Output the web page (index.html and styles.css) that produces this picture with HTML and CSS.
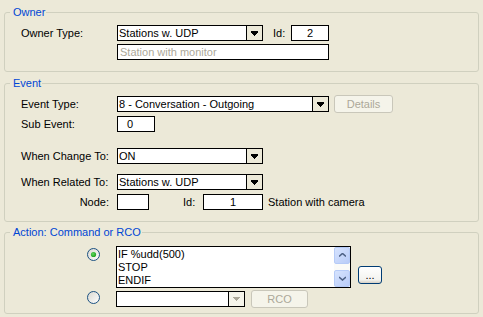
FILE: index.html
```html
<!DOCTYPE html>
<html lang="en">
<head>
    <meta charset="UTF-8">
    <title>Event Action</title>
    <link rel="stylesheet" href="styles.css">
</head>
<body>
    <div class="dialog">
        <fieldset class="group">
            <legend>Owner</legend>
            <div class="body owner">
                <div class="row">
                    <span class="label">Owner Type:</span>
                    <div class="combo w146">
                        <span class="value">Stations w. UDP</span>
                        <span class="drop"><svg width="7" height="5"><path d="M0 0h7v2H0zM1 2h5v1H1zM2 3h3v1H2zM3 4h1v1H3z"/></svg></span>
                    </div>
                    <span class="id-label">Id:</span>
                    <div class="edit w38 center">2</div>
                </div>
                <div class="row gap3">
                    <span class="label"></span>
                    <div class="edit w212 disabled">Station with monitor</div>
                </div>
            </div>
        </fieldset>

        <fieldset class="group event">
            <legend>Event</legend>
            <div class="body">
                <div class="row">
                    <span class="label">Event Type:</span>
                    <div class="combo w212">
                        <span class="value">8 - Conversation - Outgoing</span>
                        <span class="drop"><svg width="7" height="5"><path d="M0 0h7v2H0zM1 2h5v1H1zM2 3h3v1H2zM3 4h1v1H3z"/></svg></span>
                    </div>
                    <button class="btn disabled details">Details</button>
                </div>
                <div class="row gap4">
                    <span class="label">Sub Event:</span>
                    <div class="edit w38 pad9">0</div>
                </div>
                <div class="row gap16">
                    <span class="label">When Change To:</span>
                    <div class="combo w146">
                        <span class="value">ON</span>
                        <span class="drop"><svg width="7" height="5"><path d="M0 0h7v2H0zM1 2h5v1H1zM2 3h3v1H2zM3 4h1v1H3z"/></svg></span>
                    </div>
                </div>
                <div class="row gap10">
                    <span class="label">When Related To:</span>
                    <div class="combo w146">
                        <span class="value">Stations w. UDP</span>
                        <span class="drop"><svg width="7" height="5"><path d="M0 0h7v2H0zM1 2h5v1H1zM2 3h3v1H2zM3 4h1v1H3z"/></svg></span>
                    </div>
                </div>
                <div class="row gap4">
                    <span class="label right">Node:</span>
                    <div class="edit w32"></div>
                    <span class="id-label node-id">Id:</span>
                    <div class="edit w60 center">1</div>
                    <span class="note">Station with camera</span>
                </div>
            </div>
        </fieldset>

        <fieldset class="group action">
            <legend>Action: Command or RCO</legend>
            <div class="body">
                <div class="row tall">
                    <span class="radio-cell">
                        <svg class="radio" width="13" height="13" viewBox="0 0 13 13">
                            <defs>
                                <linearGradient id="rg1" x1="0" y1="0" x2="1" y2="1">
                                    <stop offset="0" stop-color="#D8D7CF"/>
                                    <stop offset="1" stop-color="#FFFFFF"/>
                                </linearGradient>
                                <radialGradient id="dot" cx="0.4" cy="0.4" r="0.6">
                                    <stop offset="0" stop-color="#5ED85E"/>
                                    <stop offset="1" stop-color="#21A121"/>
                                </radialGradient>
                            </defs>
                            <circle cx="6.5" cy="6.5" r="6" fill="url(#rg1)" stroke="#1C5180"/>
                            <circle cx="6.5" cy="6.5" r="2.6" fill="url(#dot)"/>
                        </svg>
                    </span>
                    <div class="memo">
                        <div class="lines">IF %udd(500)<br>STOP<br>ENDIF</div>
                        <div class="scroll">
                            <span class="sbtn"><svg width="7" height="5"><path d="M0 3.5L3.5 0.5L7 3.5" fill="none" stroke="#4D6185" stroke-width="1.6"/></svg></span>
                            <span class="track"></span>
                            <span class="sbtn"><svg width="7" height="5"><path d="M0 1L3.5 4L7 1" fill="none" stroke="#4D6185" stroke-width="1.6"/></svg></span>
                        </div>
                    </div>
                    <button class="btn xp dots">...</button>
                </div>
                <div class="row gap2 low">
                    <span class="radio-cell">
                        <svg class="radio" width="13" height="13" viewBox="0 0 13 13">
                            <defs>
                                <linearGradient id="rg2" x1="0" y1="0" x2="1" y2="1">
                                    <stop offset="0" stop-color="#D8D7CF"/>
                                    <stop offset="1" stop-color="#FFFFFF"/>
                                </linearGradient>
                            </defs>
                            <circle cx="6.5" cy="6.5" r="6" fill="url(#rg2)" stroke="#1C5180"/>
                        </svg>
                    </span>
                    <div class="combo w129 off">
                        <span class="value"></span>
                        <span class="drop"><svg width="7" height="5"><path d="M0 0h7v1H0zM1 1h5v1H1zM2 2h3v1H2zM3 3h1v1H3z" fill="#ACA899"/></svg></span>
                    </div>
                    <button class="btn disabled rco">RCO</button>
                </div>
            </div>
        </fieldset>
    </div>
</body>
</html>
```

FILE: styles.css
```css
body {
    margin: 0;
    background-color: #ECE9D8;
    font: 11px "Liberation Sans", Arial, sans-serif;
    color: #000;
}

.dialog {
    padding: 5px 4px 0 4px;
}

.group {
    margin: 0;
    padding: 0;
    min-width: 0;
    border: 1px solid #D0D0BF;
    border-radius: 3px;
}

.group.event {
    margin-top: 4px;
}

.group.action {
    margin-top: 3px;
}

.group legend {
    margin-left: 5px;
    padding: 0 1px 0 3px;
    line-height: 14px;
    color: #0046D5;
}

.body {
    padding: 6px 0 11px 16px;
}

.action .body {
    padding-top: 7px;
    padding-bottom: 5px;
}

.row {
    display: flex;
    align-items: center;
    height: 16px;
}

.gap2 { margin-top: 2px; }
.gap3 { margin-top: 3px; }
.gap4 { margin-top: 4px; }
.gap10 { margin-top: 10px; }
.gap16 { margin-top: 16px; }

.label {
    width: 96px;
    flex: none;
}

.label.right {
    text-align: right;
    padding-right: 8px;
    box-sizing: border-box;
}

.id-label {
    margin-left: 10px;
    width: 18px;
}

.node-id {
    margin-left: 34px;
    width: 20px;
}

.note {
    margin-left: 5px;
}

.w32 { width: 32px; }
.w38 { width: 38px; }
.w60 { width: 60px; }
.w129 { width: 129px; }
.w146 { width: 146px; }
.w212 { width: 212px; }

.edit,
.combo {
    box-sizing: border-box;
    height: 16px;
    border: 1px solid #000;
    background-color: #fff;
    line-height: 14px;
    white-space: nowrap;
    overflow: hidden;
    flex: none;
}

.edit {
    padding-left: 2px;
}

.edit.center {
    text-align: center;
    padding: 0;
}

.edit.pad9 {
    padding-left: 9px;
}

.edit.disabled {
    color: #ACA899;
}

.combo {
    display: flex;
}

.combo .value {
    flex: 1;
    padding-left: 1px;
}

.combo .drop {
    width: 15px;
    border-left: 1px solid #000;
    background-color: #ECE9D8;
    display: flex;
    align-items: center;
    justify-content: center;
}

.combo.off .drop {
    background-color: #F5F4EA;
    border-left-color: #000;
}

.btn {
    box-sizing: border-box;
    height: 18px;
    margin: 0;
    padding: 0;
    font: inherit;
    border-radius: 3px;
    flex: none;
}

.btn.disabled {
    border: 1px solid #C9C7BA;
    background-color: #F5F4EA;
    color: #ACA899;
}

.details {
    width: 59px;
    margin-left: 5px;
}

.rco {
    width: 57px;
    margin-left: 6px;
}

.btn.xp {
    border: 1px solid #003C74;
    background: linear-gradient(#FFFFFF, #F3F3EF 80%, #D6D0C5);
    color: #000;
}

.dots {
    width: 24px;
    align-self: flex-start;
    margin-top: 20px;
    margin-left: 7px;
    line-height: 10px;
}

.row.tall {
    height: 42px;
    align-items: flex-start;
}

.row.low {
    height: 18px;
    align-items: flex-start;
}

.radio-cell {
    width: 95px;
    flex: none;
    padding-left: 66px;
    box-sizing: border-box;
    height: 13px;
}

.tall .radio-cell {
    margin-top: 2px;
}

.low .radio-cell {
    margin-top: 1px;
}

.radio {
    display: block;
}

.low .combo {
    margin-top: 1px;
}

.memo {
    box-sizing: border-box;
    width: 235px;
    height: 42px;
    border: 1px solid #000;
    background-color: #fff;
    display: flex;
    flex: none;
}

.memo .lines {
    flex: 1;
    padding: 1px 0 0 1px;
    line-height: 13px;
}

.scroll {
    width: 16px;
    display: flex;
    flex-direction: column;
    background-color: #FBFBF8;
}

.sbtn {
    box-sizing: border-box;
    height: 17px;
    border: 1px solid #B6CBF7;
    border-radius: 2px;
    background: linear-gradient(135deg, #D6E3FE, #B9CCF8);
    display: flex;
    align-items: center;
    justify-content: center;
}

.track {
    flex: 1;
}
```
